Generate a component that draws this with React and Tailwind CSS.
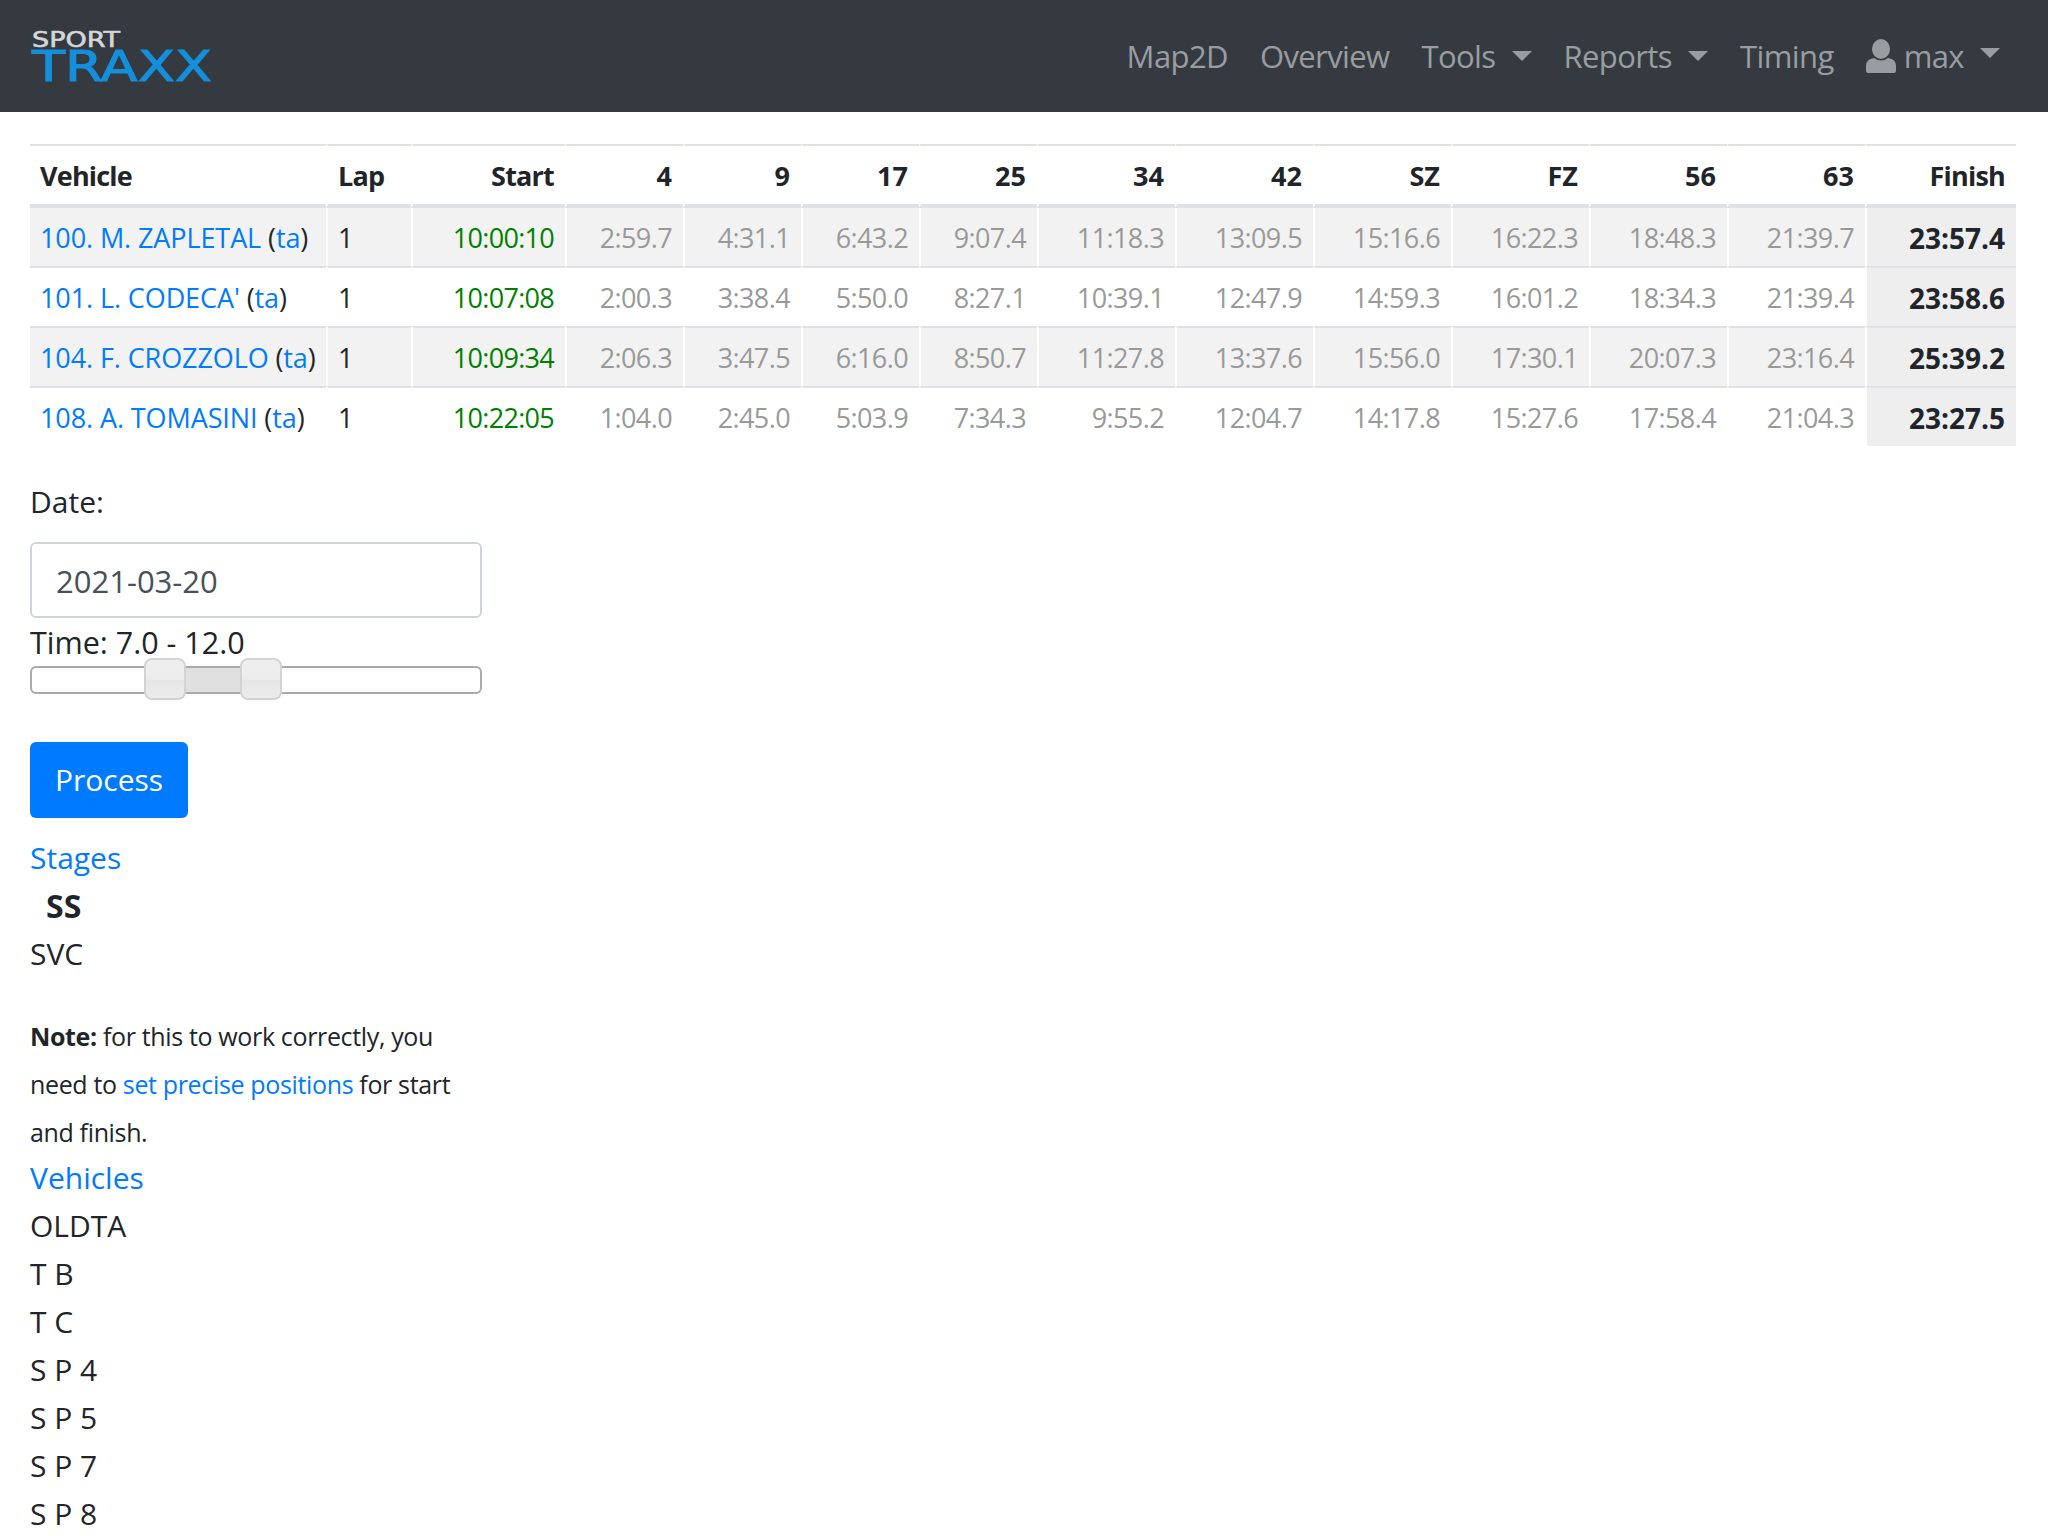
const font = { fontFamily: '"Open Sans", sans-serif' };

const columns = ['4', '9', '17', '25', '34', '42', 'SZ', 'FZ', '56', '63'];
const colWidths = ['w-[118px]', 'w-[118px]', 'w-[118px]', 'w-[118px]', 'w-[138px]', 'w-[138px]', 'w-[138px]', 'w-[138px]', 'w-[138px]', 'w-[138px]'];

const rows = [
  { name: '100. M. ZAPLETAL', start: '10:00:10', times: ['2:59.7', '4:31.1', '6:43.2', '9:07.4', '11:18.3', '13:09.5', '15:16.6', '16:22.3', '18:48.3', '21:39.7'], finish: '23:57.4' },
  { name: "101. L. CODECA'", start: '10:07:08', times: ['2:00.3', '3:38.4', '5:50.0', '8:27.1', '10:39.1', '12:47.9', '14:59.3', '16:01.2', '18:34.3', '21:39.4'], finish: '23:58.6' },
  { name: '104. F. CROZZOLO', start: '10:09:34', times: ['2:06.3', '3:47.5', '6:16.0', '8:50.7', '11:27.8', '13:37.6', '15:56.0', '17:30.1', '20:07.3', '23:16.4'], finish: '25:39.2' },
  { name: '108. A. TOMASINI', start: '10:22:05', times: ['1:04.0', '2:45.0', '5:03.9', '7:34.3', '9:55.2', '12:04.7', '14:17.8', '15:27.6', '17:58.4', '21:04.3'], finish: '23:27.5' },
];

const vehicles = ['OLDTA', 'T B', 'T C', 'S P 4', 'S P 5', 'S P 7', 'S P 8'];

function Caret() {
  return <span className="ml-4 inline-block w-0 h-0 align-middle -translate-y-[3px] border-x-[10px] border-x-transparent border-t-[10px] border-t-[#9a9da0]" />;
}

function Navbar() {
  return (
    <nav className="h-[112px] bg-[#343a40] flex items-center justify-between pl-8 pr-12">
      <svg width="182" height="50" viewBox="0 0 182 50" className="mt-[2px] overflow-visible">
        <text x="0" y="15" textLength="88" lengthAdjust="spacingAndGlyphs" fontFamily="DejaVu Sans" fontSize="20.5" stroke="#d4d6d8" strokeWidth="0.6" fill="#d4d6d8">SPORT</text>
        <text x="0" y="49" textLength="180" lengthAdjust="spacingAndGlyphs" fontFamily="DejaVu Sans" fontSize="42.5" stroke="#148fdc" strokeWidth="1" fill="#148fdc">TRAXX</text>
      </svg>
      <div className="flex items-center gap-8 text-[31px] tracking-[-0.6px] text-[#9a9da0]">
        <span>Map2D</span>
        <span>Overview</span>
        <span>Tools<Caret /></span>
        <span>Reports<Caret /></span>
        <span>Timing</span>
        <span className="flex items-center">
          <svg width="30" height="34" viewBox="0 0 30 34" className="mr-2" fill="#9a9da0">
            <ellipse cx="15" cy="10" rx="9" ry="10" />
            <path d="M2 34 Q0 34 0 31 V27 Q0 20 8 19 Q15 24 22 19 Q30 20 30 27 V31 Q30 34 28 34 Z" />
          </svg>
          max<Caret />
        </span>
      </div>
    </nav>
  );
}

function ResultsTable() {
  return (
    <table className="w-[1986px] table-fixed border-separate border-spacing-0 text-[27px] text-[#212529]">
      <thead>
        <tr className="h-[64px] font-bold">
          <th className="w-[296px] border-t-2 border-b-4 border-[#dee2e6] text-left px-[10px] pt-[2px] tracking-[-0.8px]">Vehicle</th>
          <th className="w-[85px] border-t-2 border-b-4 border-l-2 border-l-white border-[#dee2e6] text-left px-[10px] pt-[2px] tracking-[-0.8px]">Lap</th>
          <th className="w-[154px] border-t-2 border-b-4 border-l-2 border-l-white border-[#dee2e6] text-right pl-[10px] pr-[11px] pt-[2px] tracking-[-0.8px]">Start</th>
          {columns.map((c, i) => (
            <th key={c} className={`${colWidths[i]} border-t-2 border-b-4 border-l-2 border-l-white border-[#dee2e6] text-right pl-[10px] pr-[11px] pt-[2px]`}>{c}</th>
          ))}
          <th className="w-[151px] border-t-2 border-b-4 border-l-2 border-l-white border-[#dee2e6] text-right pl-[10px] pr-[11px] pt-[2px] tracking-[-0.8px]">Finish</th>
        </tr>
      </thead>
      <tbody>
        {rows.map((r, idx) => {
          const bg = idx % 2 === 0 ? 'bg-[#f2f2f2]' : 'bg-white';
          const top = idx > 0 ? 'border-t-2 border-t-[#dee2e6]' : '';
          return (
            <tr key={r.name} className={idx > 0 ? 'h-[60px]' : 'h-[58px]'}>
              <td className={`${bg} ${top} px-[10px] pt-[2px] whitespace-nowrap tracking-[-0.1px]`}>
                <a className="text-[#007bff]">{r.name}</a> (<a className="text-[#007bff]">ta</a>)
              </td>
              <td className={`${bg} ${top} border-l-2 border-l-white px-[10px] pt-[2px]`}>1</td>
              <td className={`${bg} ${top} border-l-2 border-l-white pl-[10px] pr-[11px] pt-[2px] text-right text-[#008000] tracking-[-0.7px]`}>{r.start}</td>
              {r.times.map((t, i) => (
                <td key={i} className={`${bg} ${top} border-l-2 border-l-white pl-[10px] pr-[11px] pt-[2px] text-right text-[#999999] tracking-[-0.6px]`}>{t}</td>
              ))}
              <td className={`bg-[#eeeeee] ${top} border-l-2 border-l-white pl-[10px] pr-[11px] pt-[2px] text-right font-bold text-[28px]`}>{r.finish}</td>
            </tr>
          );
        })}
      </tbody>
    </table>
  );
}

function Sidebar() {
  return (
    <div className="w-[452px] text-[30px] leading-[48px] text-[#212529]">
      <div className="mt-[32px]">Date:</div>
      <div className="mt-[16px] h-[76px] rounded-[6px] border-2 border-[#ced4da] flex items-center px-6 pt-[2px] text-[31px] text-[#495057]">2021-03-20</div>
      <div className="h-[48px] text-[30.5px]">Time: 7.0 - 12.0</div>
      <div className="relative h-[28px] rounded-[6px] border-2 border-[#aaaaaa] bg-white">
        <div className="absolute left-[112px] w-[98px] top-0 bottom-0 bg-[#e0e0e0]" />
        <div className="absolute left-[112px] -top-[10px] w-[42px] h-[42px] rounded-[8px] border-2 border-[#d3d3d3] bg-[linear-gradient(#eeeeee_50%,#e6e6e6_55%,#ececec)]" />
        <div className="absolute left-[208px] -top-[10px] w-[42px] h-[42px] rounded-[8px] border-2 border-[#d3d3d3] bg-[linear-gradient(#eeeeee_50%,#e6e6e6_55%,#ececec)]" />
      </div>
      <button className="mt-[48px] w-[158px] h-[76px] rounded-[6px] bg-[#007bff] text-white">Process</button>
      <div className="mt-[16px] text-[#007bff]">Stages</div>
      <div className="pl-4 font-bold text-[32px]">SS</div>
      <div>SVC</div>
      <p className="mt-[34px] text-[25px] tracking-[-0.35px]"><b>Note:</b> for this to work correctly, you need to <a className="text-[#007bff]">set precise positions</a> for start and finish.</p>
      <div className="-mt-[2px] text-[#007bff]">Vehicles</div>
      {vehicles.map(v => <div key={v}>{v}</div>)}
    </div>
  );
}

export default function App() {
  return (
    <div className="bg-white min-h-screen" style={font}>
      <Navbar />
      <div className="px-[30px] pt-[32px]">
        <ResultsTable />
        <Sidebar />
      </div>
    </div>
  );
}
